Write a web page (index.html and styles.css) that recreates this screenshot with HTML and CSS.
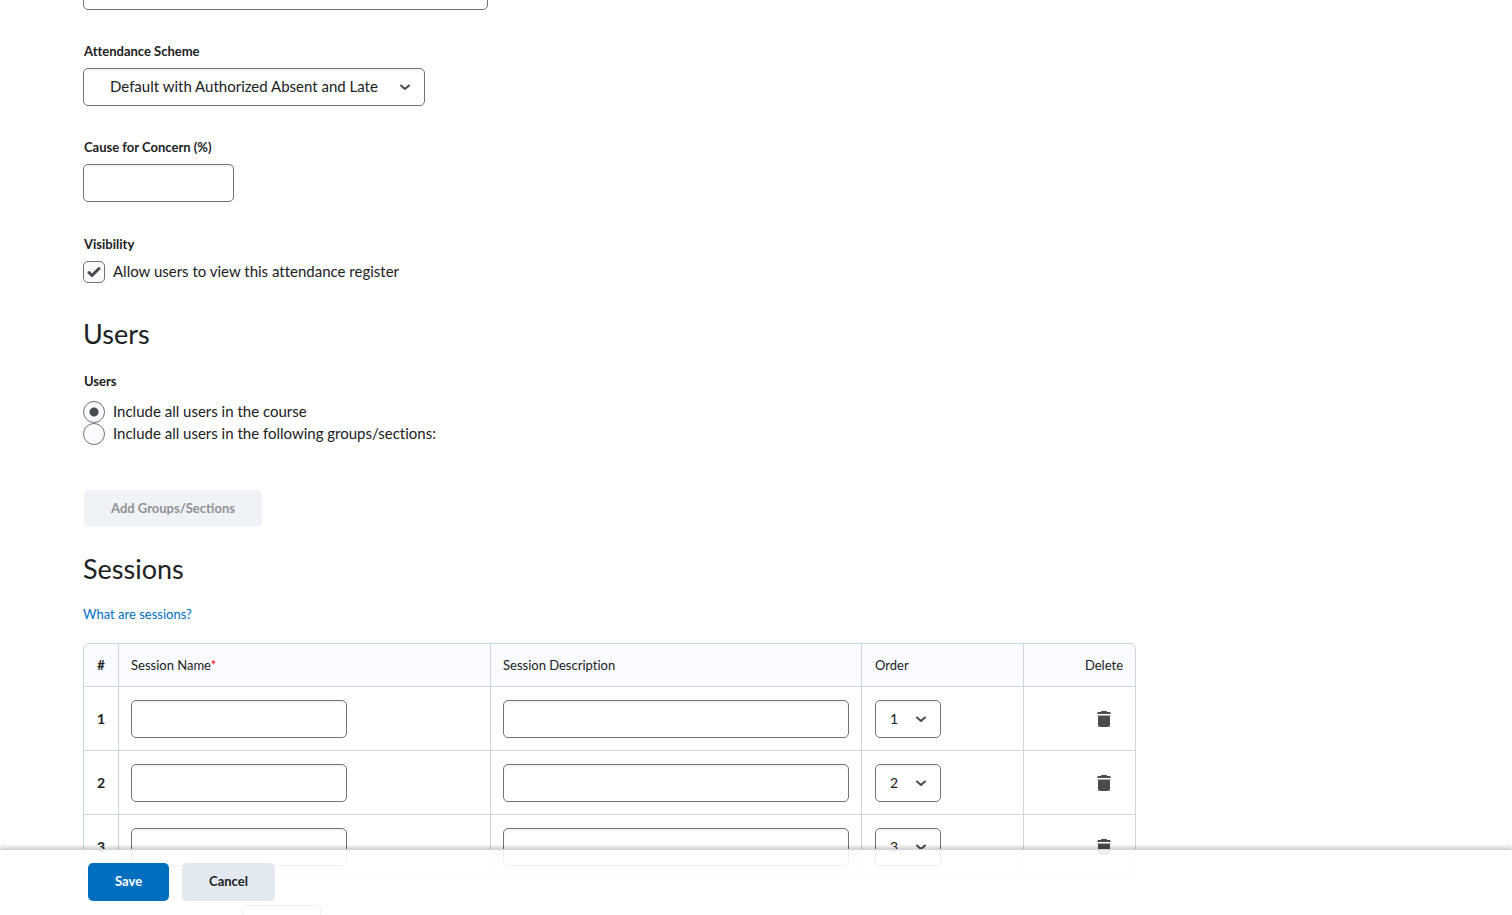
FILE: index.html
```
<!DOCTYPE html>
<html lang="en">
  <head>
    <meta charset="UTF-8" />
    <meta name="viewport" content="width=device-width, initial-scale=1.0" />
    <title>Edit Attendance Register</title>
    <link rel="stylesheet" href="styles.css" />
  </head>
  <body>
    <svg class="sprite" aria-hidden="true">
      <symbol id="trash" viewBox="0 0 14 18">
        <path d="M4 2V1.500Q4 1 4.500 1h5q.5 0 .5.500V2h3q.5 0 .5.500V4H.5V2.500Q.5 2 1 2z" />
        <path d="M1 5.500h12V15q0 2-2 2H3q-2 0-2-2z" />
      </symbol>
    </svg>

    <form class="page">
      <div class="field">
        <input type="text" class="text-box description" aria-label="Description" />
      </div>

      <div class="field">
        <label class="label" for="scheme">Attendance Scheme</label>
        <select class="select scheme" id="scheme">
          <option>Default with Authorized Absent and Late</option>
        </select>
      </div>

      <div class="field">
        <label class="label" for="concern">Cause for Concern (%)</label>
        <input type="text" class="text-box concern" id="concern" />
      </div>

      <div class="field visibility">
        <span class="label">Visibility</span>
        <label class="choice">
          <input type="checkbox" class="check" checked />
          <span>Allow users to view this attendance register</span>
        </label>
      </div>

      <h2>Users</h2>
      <fieldset class="users">
        <legend class="label">Users</legend>
        <label class="choice">
          <input type="radio" class="radio" name="users" checked />
          <span>Include all users in the course</span>
        </label>
        <label class="choice">
          <input type="radio" class="radio" name="users" />
          <span>Include all users in the following groups/sections:</span>
        </label>
      </fieldset>
      <button type="button" class="btn btn-groups" disabled>Add Groups/Sections</button>

      <h2>Sessions</h2>
      <a class="help" href="#">What are sessions?</a>

      <table class="sessions">
        <thead>
          <tr>
            <th class="col-num">#</th>
            <th class="col-name">Session Name<span class="required">*</span></th>
            <th class="col-desc">Session Description</th>
            <th class="col-order">Order</th>
            <th class="col-delete">Delete</th>
          </tr>
        </thead>
        <tbody>
          <tr>
            <th class="col-num">1</th>
            <td><input type="text" class="text-box name" aria-label="Session 1 name" /></td>
            <td><input type="text" class="text-box" aria-label="Session 1 description" /></td>
            <td>
              <select class="select order" aria-label="Session 1 order">
                <option selected>1</option>
                <option>2</option>
                <option>3</option>
              </select>
            </td>
            <td class="col-delete">
              <button type="button" class="icon-btn" aria-label="Delete session 1">
                <svg class="icon"><use href="#trash" /></svg>
              </button>
            </td>
          </tr>
          <tr>
            <th class="col-num">2</th>
            <td><input type="text" class="text-box name" aria-label="Session 2 name" /></td>
            <td><input type="text" class="text-box" aria-label="Session 2 description" /></td>
            <td>
              <select class="select order" aria-label="Session 2 order">
                <option>1</option>
                <option selected>2</option>
                <option>3</option>
              </select>
            </td>
            <td class="col-delete">
              <button type="button" class="icon-btn" aria-label="Delete session 2">
                <svg class="icon"><use href="#trash" /></svg>
              </button>
            </td>
          </tr>
          <tr>
            <th class="col-num">3</th>
            <td><input type="text" class="text-box name" aria-label="Session 3 name" /></td>
            <td><input type="text" class="text-box" aria-label="Session 3 description" /></td>
            <td>
              <select class="select order" aria-label="Session 3 order">
                <option>1</option>
                <option>2</option>
                <option selected>3</option>
              </select>
            </td>
            <td class="col-delete">
              <button type="button" class="icon-btn" aria-label="Delete session 3">
                <svg class="icon"><use href="#trash" /></svg>
              </button>
            </td>
          </tr>
        </tbody>
      </table>

      <div class="add-sessions">
        <input type="text" class="text-box count" aria-label="Number of sessions to add" />
      </div>
    </form>

    <div class="footer">
      <button type="button" class="btn btn-save">Save</button>
      <button type="button" class="btn btn-cancel">Cancel</button>
    </div>
  </body>
</html>
```
FILE: styles.css
```
* {
  box-sizing: border-box;
}

body {
  background-color: #fff;
  color: #202122;
  font-family: Lato, sans-serif;
  font-size: 14px;
  font-variant-ligatures: none;
  line-height: 22px;
  margin: 0;
  overflow: hidden;
}

.sprite {
  display: none;
}

.page {
  margin-top: -28px;
  padding: 0 83px;
}

.field {
  margin-bottom: 32px;
}

.field.visibility {
  margin: 33px 0;
}

.label {
  display: block;
  font-size: 13px;
  font-weight: 700;
  line-height: 18px;
  margin-bottom: 8px;
  padding: 0 1px;
}

h2 {
  font-size: 27px;
  font-weight: 400;
  line-height: 36px;
  margin: 0;
}

.text-box,
.select {
  background-color: #fff;
  border: 1px solid #6e7376;
  border-radius: 5px;
  box-shadow: inset 0 2px 0 #f1f3f5;
  color: #202122;
  display: block;
  font-family: inherit;
  font-size: 15px;
  height: 38px;
  padding: 0 12px;
  width: 100%;
}

.text-box.description {
  max-width: 405px;
}

.text-box.concern {
  width: 151px;
}

.text-box.name {
  width: 216px;
}

.text-box.count {
  width: 79px;
}

.select {
  appearance: none;
  background-image: url("data:image/svg+xml,%3Csvg xmlns='http://www.w3.org/2000/svg' width='12' height='8'%3E%3Cpath d='M2 2.500l4 3.500L10 2.500' fill='none' stroke='%23494c4e' stroke-width='2' stroke-linecap='round' stroke-linejoin='round'/%3E%3C/svg%3E");
  background-position: right 13px center;
  background-repeat: no-repeat;
}

.select.scheme {
  padding: 0 40px 2px 26px;
  width: 342px;
}

.select.order {
  font-size: 14px;
  padding: 0 30px 0 14px;
  width: 66px;
}

.choice {
  align-items: center;
  display: flex;
  font-size: 15px;
  gap: 8px;
  height: 22px;
}

.choice span {
  padding-bottom: 2px;
}

.check,
.radio {
  appearance: none;
  background: #f9fbff no-repeat center;
  border: 1px solid #6e7376;
  flex: none;
  height: 22px;
  margin: 0;
  width: 22px;
}

.check {
  border-radius: 5px;
}

.check:checked {
  background-image: url("data:image/svg+xml,%3Csvg xmlns='http://www.w3.org/2000/svg' width='14' height='12'%3E%3Cpath d='M2 6.500l3 3L12 2.500' fill='none' stroke='%23494c4e' stroke-width='3' stroke-linecap='round' stroke-linejoin='round'/%3E%3C/svg%3E");
}

.radio {
  border-radius: 50%;
}

.radio:checked {
  background-image: radial-gradient(circle, #494c4e 4px, transparent 5px);
}

.users {
  border: 0;
  margin: 20px 0 45px;
  padding: 0;
}

.users .label {
  margin-bottom: 11px;
}

.btn {
  border: 0;
  border-radius: 5px;
  font-family: inherit;
  font-size: 13px;
  font-weight: 700;
  height: 38px;
  padding: 0 27px 2px;
}

.btn-groups {
  background-color: #eff3f8;
  color: #909294;
  display: block;
  height: 37px;
  margin: 0 1px 24px;
}

.help {
  color: #006fbf;
  display: inline-block;
  font-size: 13px;
  line-height: 18px;
  margin: 18px 0 20px;
  text-decoration: none;
  vertical-align: top;
}

.sessions {
  border-collapse: separate;
  border-spacing: 0;
  max-width: 1053px;
  table-layout: fixed;
  width: 100%;
}

.sessions th,
.sessions td {
  border: solid #cdd5dc;
  border-width: 0 1px 1px 0;
  font-weight: 400;
  height: 64px;
  padding: 0 12px;
  text-align: left;
}

.sessions thead th {
  background-color: #f9fbff;
  border-top-width: 1px;
  font-size: 13px;
  height: 44px;
}

.sessions th.col-num {
  border-left-width: 1px;
  font-weight: 700;
  padding: 0;
  text-align: center;
  width: 36px;
}

.sessions .col-name {
  width: 372px;
}

.sessions .col-desc {
  width: 371px;
}

.sessions .col-order {
  width: 162px;
}

.sessions .col-order,
.sessions td:nth-child(4) {
  padding-left: 13px;
}

.sessions .col-delete {
  text-align: right;
  width: 112px;
}

.sessions thead th:first-child {
  border-top-left-radius: 6px;
}

.sessions thead th:last-child {
  border-top-right-radius: 6px;
}

.sessions tbody tr:last-child th {
  border-bottom-left-radius: 6px;
}

.sessions tbody tr:last-child td:last-child {
  border-bottom-right-radius: 6px;
}

.required {
  color: #f00;
}

.icon-btn {
  background: none;
  border: 0;
  display: block;
  height: 38px;
  margin-left: auto;
  padding: 0 12px;
}

.icon {
  display: block;
  fill: #494c4e;
  height: 18px;
  width: 14px;
}

.add-sessions {
  padding: 26px 0 0 159px;
}

.footer {
  background-color: rgba(255, 255, 255, 0.9);
  border-top: 1px solid #cdd5dc;
  bottom: 0;
  box-shadow: 0 -2px 4px rgba(0, 0, 0, 0.2);
  display: flex;
  gap: 13px;
  left: 0;
  padding: 13px 88px 14px;
  position: fixed;
  right: 0;
}

.btn-save {
  background-color: #006fbf;
  color: #fff;
}

.btn-cancel {
  background-color: #e3e9f1;
  color: #202122;
}
```
